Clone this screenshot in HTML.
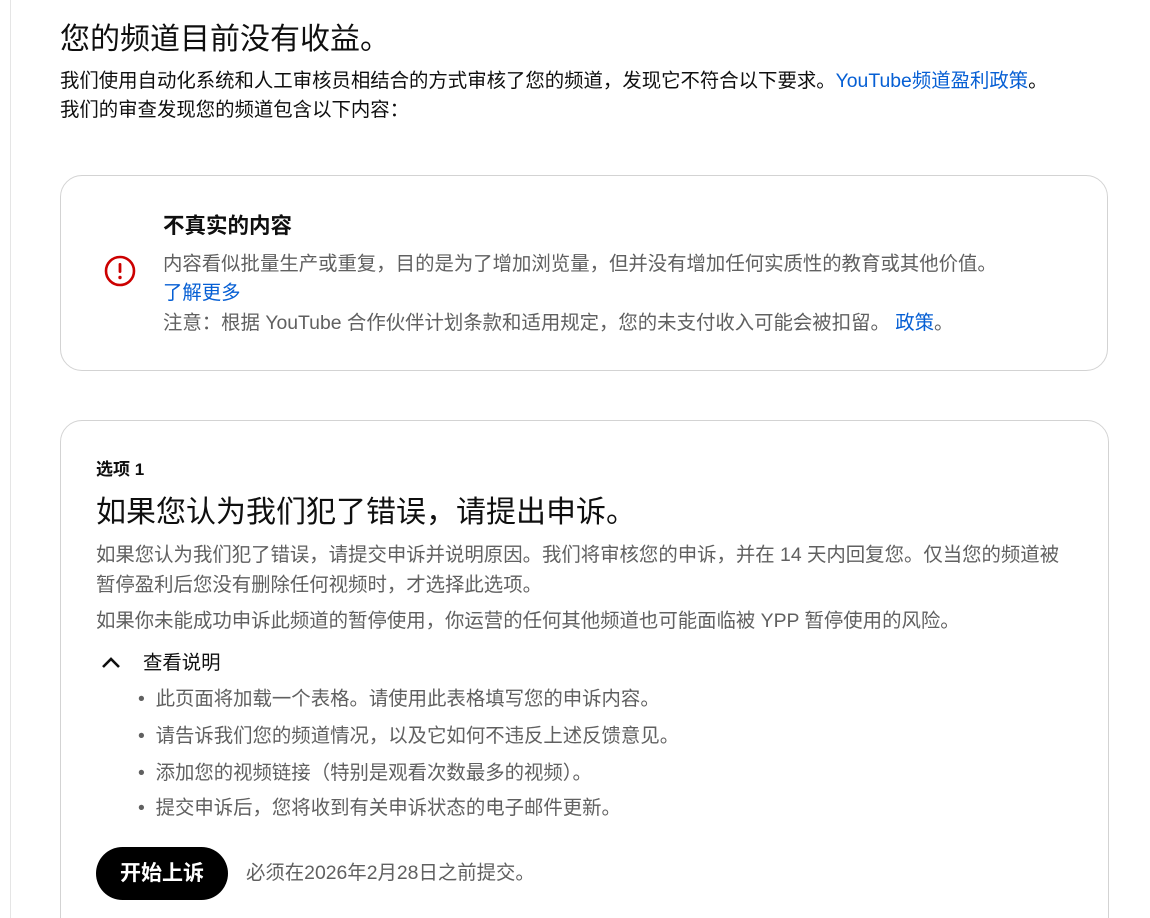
<!DOCTYPE html>
<html><head><meta charset="utf-8"><style>
*{margin:0;padding:0;box-sizing:border-box}
html,body{width:1150px;height:918px;overflow:hidden}
body{background:#fff;font-family:"Liberation Sans","Noto Sans CJK SC",sans-serif;color:#0f0f0f;position:relative}
.vl{position:absolute;left:10px;top:0;width:1px;height:918px;background:#e5e5e5}
.a{position:absolute;white-space:nowrap}
.link{color:#065fd4}
.card{position:absolute;border:1px solid #d3d3d3;border-radius:22px}
.g{color:#606060}
.t{font-size:19.4px;line-height:28px}
</style></head><body>
<div class="vl"></div>
<div class="a" style="left:60px;top:21px;font-size:30px;line-height:38px">您的频道目前没有收益。</div>
<div class="a t" style="left:60px;top:67px">我们使用自动化系统和人工审核员相结合的方式审核了您的频道，发现它不符合以下要求。<span class="link">YouTube频道盈利政策</span>。</div>
<div class="a t" style="left:60px;top:96px">我们的审查发现您的频道包含以下内容：</div>

<div class="card" style="left:60px;top:175px;width:1048px;height:196px"></div>
<svg class="a" style="left:104px;top:255px" width="32" height="32" viewBox="0 0 32 32"><circle cx="16" cy="16" r="14" fill="none" stroke="#cc0000" stroke-width="2.6"/><rect x="14.6" y="8" width="2.8" height="10" rx="1.2" fill="#cc0000"/><circle cx="16" cy="22.5" r="1.7" fill="#cc0000"/></svg>
<div class="a" style="left:163px;top:211px;font-size:21.5px;line-height:30px;font-weight:bold">不真实的内容</div>
<div class="a g t" style="left:163px;top:250px">内容看似批量生产或重复，目的是为了增加浏览量，但并没有增加任何实质性的教育或其他价值。</div>
<div class="a link t" style="left:163px;top:279px">了解更多</div>
<div class="a g t" style="left:163px;top:309px">注意：根据 YouTube 合作伙伴计划条款和适用规定，您的未支付收入可能会被扣留。 <span class="link">政策</span>。</div>

<div class="card" style="left:60px;top:420px;width:1049px;height:540px"></div>
<div class="a" style="left:96px;top:459px;font-size:17px;line-height:22px;font-weight:bold">选项 1</div>
<div class="a" style="left:96px;top:494px;font-size:30px;line-height:38px">如果您认为我们犯了错误，请提出申诉。</div>
<div class="a g t" style="left:96px;top:541px">如果您认为我们犯了错误，请提交申诉并说明原因。我们将审核您的申诉，并在 14 天内回复您。仅当您的频道被</div>
<div class="a g t" style="left:96px;top:571px">暂停盈利后您没有删除任何视频时，才选择此选项。</div>
<div class="a g t" style="left:96px;top:607px">如果你未能成功申诉此频道的暂停使用，你运营的任何其他频道也可能面临被 YPP 暂停使用的风险。</div>
<svg class="a" style="left:100px;top:654px" width="22" height="16" viewBox="0 0 22 16"><path d="M3 13 L11 5 L19 13" fill="none" stroke="#0f0f0f" stroke-width="2.6"/></svg>
<div class="a t" style="left:143px;top:649px">查看说明</div>
<div class="a g t" style="left:138px;top:685px">•&nbsp;&nbsp;此页面将加载一个表格。请使用此表格填写您的申诉内容。</div>
<div class="a g t" style="left:138px;top:722px">•&nbsp;&nbsp;请告诉我们您的频道情况，以及它如何不违反上述反馈意见。</div>
<div class="a g t" style="left:138px;top:759px">•&nbsp;&nbsp;添加您的视频链接（特别是观看次数最多的视频）。</div>
<div class="a g t" style="left:138px;top:794px">•&nbsp;&nbsp;提交申诉后，您将收到有关申诉状态的电子邮件更新。</div>
<div class="a" style="left:96px;top:847px;width:132px;height:53px;border-radius:27px;background:#000;color:#fff;font-size:21px;font-weight:bold;line-height:53px;text-align:center">开始上诉</div>
<div class="a g t" style="left:246px;top:859px">必须在2026年2月28日之前提交。</div>
</body></html>
